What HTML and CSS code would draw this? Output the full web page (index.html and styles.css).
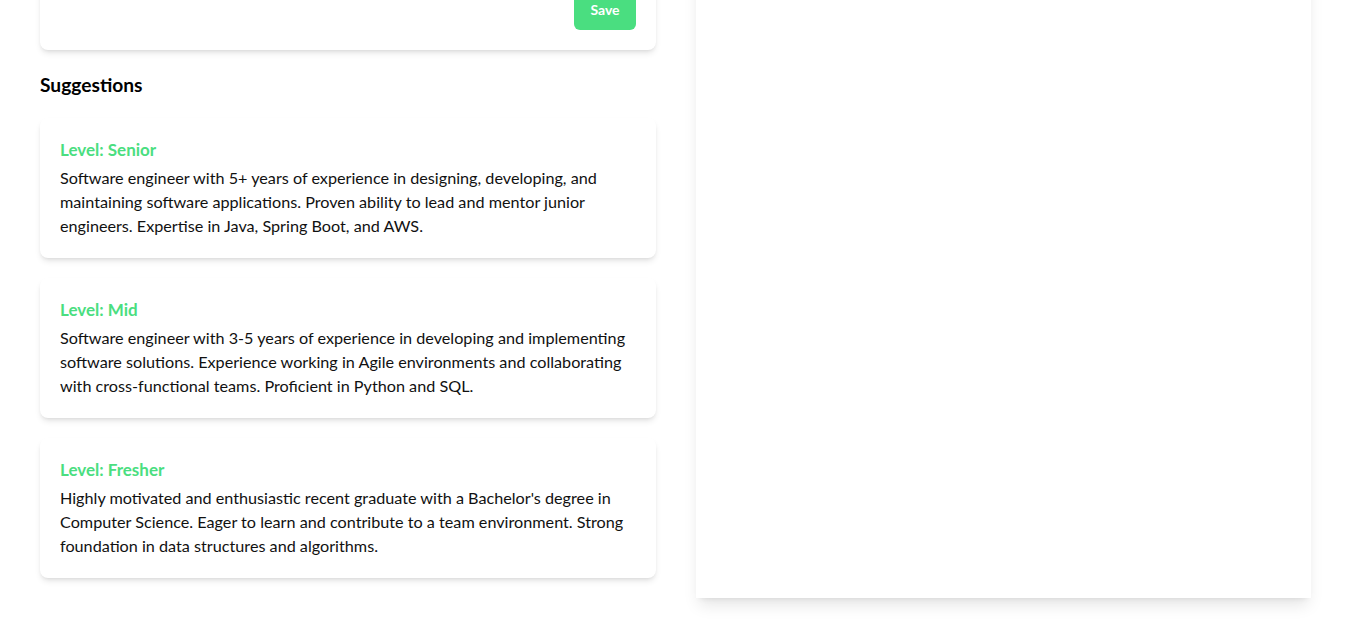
FILE: index.html
```html
<!DOCTYPE html>
<html lang="en">
<head>
<meta charset="utf-8">
<title>Summary</title>
<link rel="stylesheet" href="styles.css">
</head>
<body>
<main class="page">
  <section class="editor">
    <div class="card form-card">
      <div class="actions">
        <button class="save-btn" type="button">Save</button>
      </div>
    </div>
    <h2 class="section-title">Suggestions</h2>
    <div class="card suggestion">
      <h3 class="level">Level: Senior</h3>
      <p class="desc">Software engineer with 5+ years of experience in designing, developing, and maintaining software applications. Proven ability to lead and mentor junior engineers. Expertise in Java, Spring Boot, and AWS.</p>
    </div>
    <div class="card suggestion">
      <h3 class="level">Level: Mid</h3>
      <p class="desc">Software engineer with 3-5 years of experience in developing and implementing software solutions. Experience working in Agile environments and collaborating with cross-functional teams. Proficient in Python and SQL.</p>
    </div>
    <div class="card suggestion">
      <h3 class="level">Level: Fresher</h3>
      <p class="desc">Highly motivated and enthusiastic recent graduate with a Bachelor's degree in Computer Science. Eager to learn and contribute to a team environment. Strong foundation in data structures and algorithms.</p>
    </div>
  </section>
  <aside class="preview"></aside>
</main>
</body>
</html>
```
FILE: styles.css
```css
* { box-sizing: border-box; }
html, body { margin: 0; padding: 0; background: #ffffff; }
body {
  font-family: Lato, "Liberation Sans", sans-serif;
  color: #111111;
}
.page {
  display: flex;
  align-items: stretch;
  gap: 40px;
  padding: 0 34px 27px 40px;
  margin-top: -26px;
}
.editor {
  width: 616px;
  flex: 0 0 616px;
  display: flex;
  flex-direction: column;
}
.preview {
  flex: 0 0 615px;
  width: 615px;
  background: #ffffff;
  box-shadow: 0 10px 15px -3px rgba(0,0,0,0.1), 0 4px 6px -4px rgba(0,0,0,0.1);
}
.card {
  background: #ffffff;
  border-radius: 8px;
  box-shadow: 0 4px 6px -1px rgba(0,0,0,0.1), 0 2px 4px -2px rgba(0,0,0,0.1);
  padding: 20px;
}
.actions {
  display: flex;
  justify-content: flex-end;
}
.save-btn {
  font-family: Lato, sans-serif;
  font-weight: 700;
  font-size: 14px;
  line-height: 20px;
  color: #ffffff;
  background: #4ade80;
  border: none;
  border-radius: 6px;
  padding: 6px 16px 10px;
  width: 62px;
  height: 36px;
}
.section-title {
  margin: 21px 0 19px;
  font-size: 19.2px;
  line-height: 28px;
  font-weight: 700;
  color: #000000;
}
.suggestion {
  margin-bottom: 20px;
}
.level {
  margin: 0 0 4px;
  font-size: 17px;
  line-height: 24px;
  font-weight: 700;
  color: #4ade80;
}
.desc {
  margin: 0;
  font-size: 16.2px;
  line-height: 24px;
  color: #111111;
}
```
